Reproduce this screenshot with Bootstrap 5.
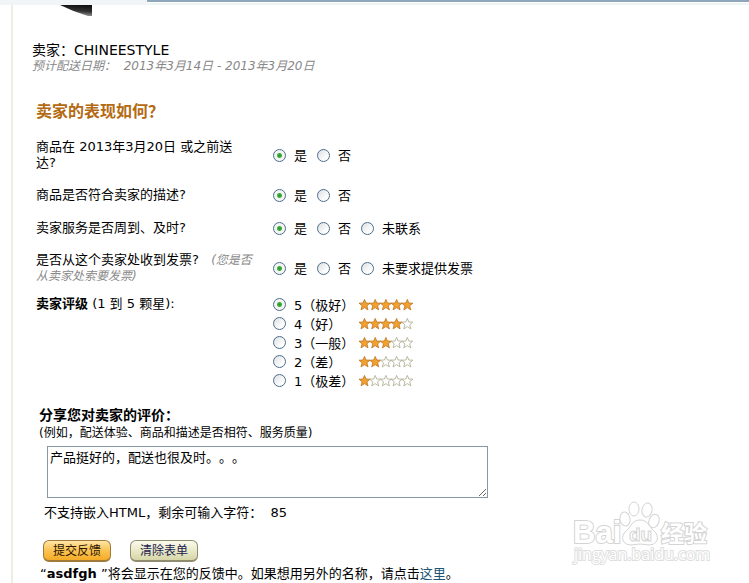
<!DOCTYPE html>
<html lang="zh-CN">
<head>
<meta charset="utf-8">
<meta name="viewport" content="width=device-width, initial-scale=1">
<title>卖家反馈</title>
<link href="https://cdn.jsdelivr.net/npm/bootstrap@5.3.0/dist/css/bootstrap.min.css" rel="stylesheet">
<style>
body{font-family:"DejaVu Sans","Noto Sans CJK SC",sans-serif;font-size:13px;line-height:16px;color:#000;background:#fff;text-spacing-trim:space-all}
.topbar{height:5px;background:#f1f5f8}
.topbar-tab{margin-left:147px;height:5px;background:linear-gradient(#8fa5b9 0 2px,#fff 2px 3px,#eef5f5 3px)}
.page{margin-left:11px;border-left:2px solid #efece3;min-height:578px}
.thumb{display:block;margin-left:47px}
.seller{margin:25px 0 0 19px;font-size:14px;line-height:18px}
.est{margin-left:19px;font-size:12px;line-height:15px;color:#888;font-style:italic}
.title{margin:26px 0 0 23px;font-size:16px;line-height:24px;font-weight:700;color:#b36a12}
.survey{margin:15px 0 0 23px}
.question{display:grid;grid-template-columns:222px 1fr;column-gap:15px;align-items:center;margin:0 0 15px}
.question.last{margin-bottom:11px}
.hint{font-size:12px;color:#888;font-style:italic}
.options{display:flex;gap:10px}
.opt{display:flex;gap:8px;align-items:center}
.opt input{appearance:none;width:13px;height:13px;margin:0;flex:none;border:1px solid #4d6c8c;border-radius:50%;background:linear-gradient(135deg,#dcdfe0,#fff 75%)}
.opt input:checked{background:radial-gradient(circle,#2a9a2a 0,#3fac3f 2px,#f3f5f2 3px)}
.opt span{padding-top:2px}
.rating{align-items:start;line-height:18px}
.rating .opt{height:19px}
.rating .opt span{width:57px;white-space:nowrap}
.rating .stars{width:54px;height:12px;flex:none}
.share{margin:16px 0 0 26px}
.share-label{font-size:14px;line-height:18px;font-weight:700}
.example{font-size:12px;line-height:18px}
.comment{display:block;width:441px;max-width:100%;height:52px;margin:4px 0 0 8px;padding:3px 2px;border:1px solid #8499a8;border-radius:0;font-size:13px;line-height:16px;color:#000;outline:0;text-spacing-trim:space-all}
.remaining{margin:7px 0 0 5px}
.actions{margin:19px 0 0 4px;gap:19px}
.pill{width:68px;height:22px;padding:0;font-size:12px;line-height:18px;border:1px solid #8f8c70;border-bottom-width:2px;border-radius:6px;color:#1c1c50;background:linear-gradient(#fbfbee,#e9e9c8 50%,#d6d6a8)}
.pill.submit{border-color:#a07a3a;color:#2a1400;background:linear-gradient(#ffe6a8,#fcc659 45%,#f5ab25)}
.note{margin:4px 0 0 1px}
.note a{color:#1b5674;text-decoration:none}
.watermark{position:absolute;right:39px;top:499px;width:140px;height:70px;pointer-events:none}
</style>
<script src="https://cdn.jsdelivr.net/npm/bootstrap@5.3.0/dist/js/bootstrap.bundle.min.js"></script>
</head>
<body class="position-relative overflow-x-hidden">
<svg width="0" height="0" class="d-block" aria-hidden="true">
<defs>
<path id="star" d="M5.5 .4 7 4 11 4.2 7.9 6.8 9 10.9 5.5 8.6 2 10.9 3.1 6.8 0 4.2 4 4Z"/>
</defs>
</svg>
<header class="topbar"><div class="topbar-tab"></div></header>
<main class="page">
<svg class="thumb" width="32" height="11" viewBox="0 0 32 11" aria-hidden="true"><defs><linearGradient id="edge" x1=".3" y1="1" x2=".5" y2="0"><stop offset="0" stop-color="#aaa"/><stop offset=".5" stop-color="#333"/><stop offset="1" stop-color="#111"/></linearGradient></defs><path d="M0 0H32V11H28Q14 7 0 0Z" fill="url(#edge)"/></svg>
<div class="seller">卖家：CHINEESTYLE</div>
<div class="est">预计配送日期： &nbsp;2013年3月14日 - 2013年3月20日</div>
<h1 class="title">卖家的表现如何？</h1>
<form>
<div class="survey">
<fieldset class="question" aria-labelledby="q1"><div id="q1">商品在 2013年3月20日 或之前送<br>达?</div>
<div class="options"><label class="opt"><input type="radio" name="arrived" checked><span>是</span></label><label class="opt"><input type="radio" name="arrived"><span>否</span></label></div></fieldset>
<fieldset class="question" aria-labelledby="q2"><div id="q2">商品是否符合卖家的描述?</div>
<div class="options"><label class="opt"><input type="radio" name="described" checked><span>是</span></label><label class="opt"><input type="radio" name="described"><span>否</span></label></div></fieldset>
<fieldset class="question" aria-labelledby="q3"><div id="q3">卖家服务是否周到、及时?</div>
<div class="options"><label class="opt"><input type="radio" name="service" checked><span>是</span></label><label class="opt"><input type="radio" name="service"><span>否</span></label><label class="opt"><input type="radio" name="service"><span>未联系</span></label></div></fieldset>
<fieldset class="question last" aria-labelledby="q4"><div id="q4">是否从这个卖家处收到发票? &nbsp;<span class="hint ps-1">(您是否<br>从卖家处索要发票)</span></div>
<div class="options"><label class="opt"><input type="radio" name="invoice" checked><span>是</span></label><label class="opt"><input type="radio" name="invoice"><span>否</span></label><label class="opt"><input type="radio" name="invoice"><span>未要求提供发票</span></label></div></fieldset>
<fieldset class="question rating mb-0" aria-labelledby="q5"><div id="q5"><b>卖家评级</b> (1 到 5 颗星):</div>
<div id="ratings">
<label class="opt"><input type="radio" name="rating" checked><span>5（极好）</span></label>
<label class="opt"><input type="radio" name="rating"><span>4（好）</span></label>
<label class="opt"><input type="radio" name="rating"><span>3（一般）</span></label>
<label class="opt"><input type="radio" name="rating"><span>2（差）</span></label>
<label class="opt"><input type="radio" name="rating"><span>1（极差）</span></label>
</div></fieldset>
</div>
<div class="share">
<label class="share-label d-block" for="comment">分享您对卖家的评价：</label>
<div class="example">(例如，配送体验、商品和描述是否相符、服务质量)</div>
<textarea class="comment" id="comment">产品挺好的，配送也很及时。。。</textarea>
<div class="remaining">不支持嵌入HTML，剩余可输入字符： &nbsp;85</div>
<div class="actions d-flex"><button type="button" class="pill submit">提交反馈</button><button type="reset" class="pill">清除表单</button></div>
<p class="note">“<b>asdfgh</b> ”将会显示在您的反馈中。如果想用另外的名称，请点击<a href="#">这里</a>。</p>
</div>
</form>
</main>
<svg class="watermark" viewBox="0 0 140 70" role="img" aria-label="Baidu 经验">
<g fill="#fff" stroke="#d4d4d4" stroke-width="1">
<text x="3" y="44" font-family="Liberation Sans, sans-serif" font-weight="700" font-size="31" paint-order="stroke" stroke-width="2">Bai</text>
<ellipse cx="55" cy="20" rx="5" ry="7" transform="rotate(-8 55 20)"/>
<ellipse cx="64" cy="10" rx="5" ry="7"/>
<ellipse cx="77" cy="11" rx="5" ry="7" transform="rotate(10 77 11)"/>
<ellipse cx="84" cy="22" rx="5" ry="7" transform="rotate(20 84 22)"/>
<path d="M70 21C62 21 61 28 56 32C50 37 52 46 61 46Q70 44 79 46C88 46 90 37 84 32C79 28 78 21 70 21Z"/>
<text x="59" y="42" font-family="Liberation Sans, sans-serif" font-size="19" font-weight="700">du</text>
<text x="91" y="43" font-family="Noto Sans CJK SC, sans-serif" font-size="23" font-weight="700" paint-order="stroke" stroke-width="2">经验</text>
</g>
<text x="4" y="61" font-family="Open Sans, sans-serif" font-size="16" fill="#fff" stroke="#dedede" stroke-width="2" paint-order="stroke">jingyan.baidu.com</text>
</svg>
<script>
document.querySelectorAll('#ratings .opt').forEach((label, row) => {
  let stars = '';
  for (let i = 0; i < 5; i++) {
    const filled = i < 5 - row;
    stars += `<use href="#star" x="${i * 10.7}" fill="${filled ? '#f2a12e' : '#fff'}" stroke="${filled ? '#bd7420' : '#aaa88c'}" stroke-width=".8"/>`;
  }
  label.insertAdjacentHTML('beforeend', `<svg class="stars" viewBox="0 0 54 12" aria-hidden="true">${stars}</svg>`);
});
</script>
</body>
</html>
